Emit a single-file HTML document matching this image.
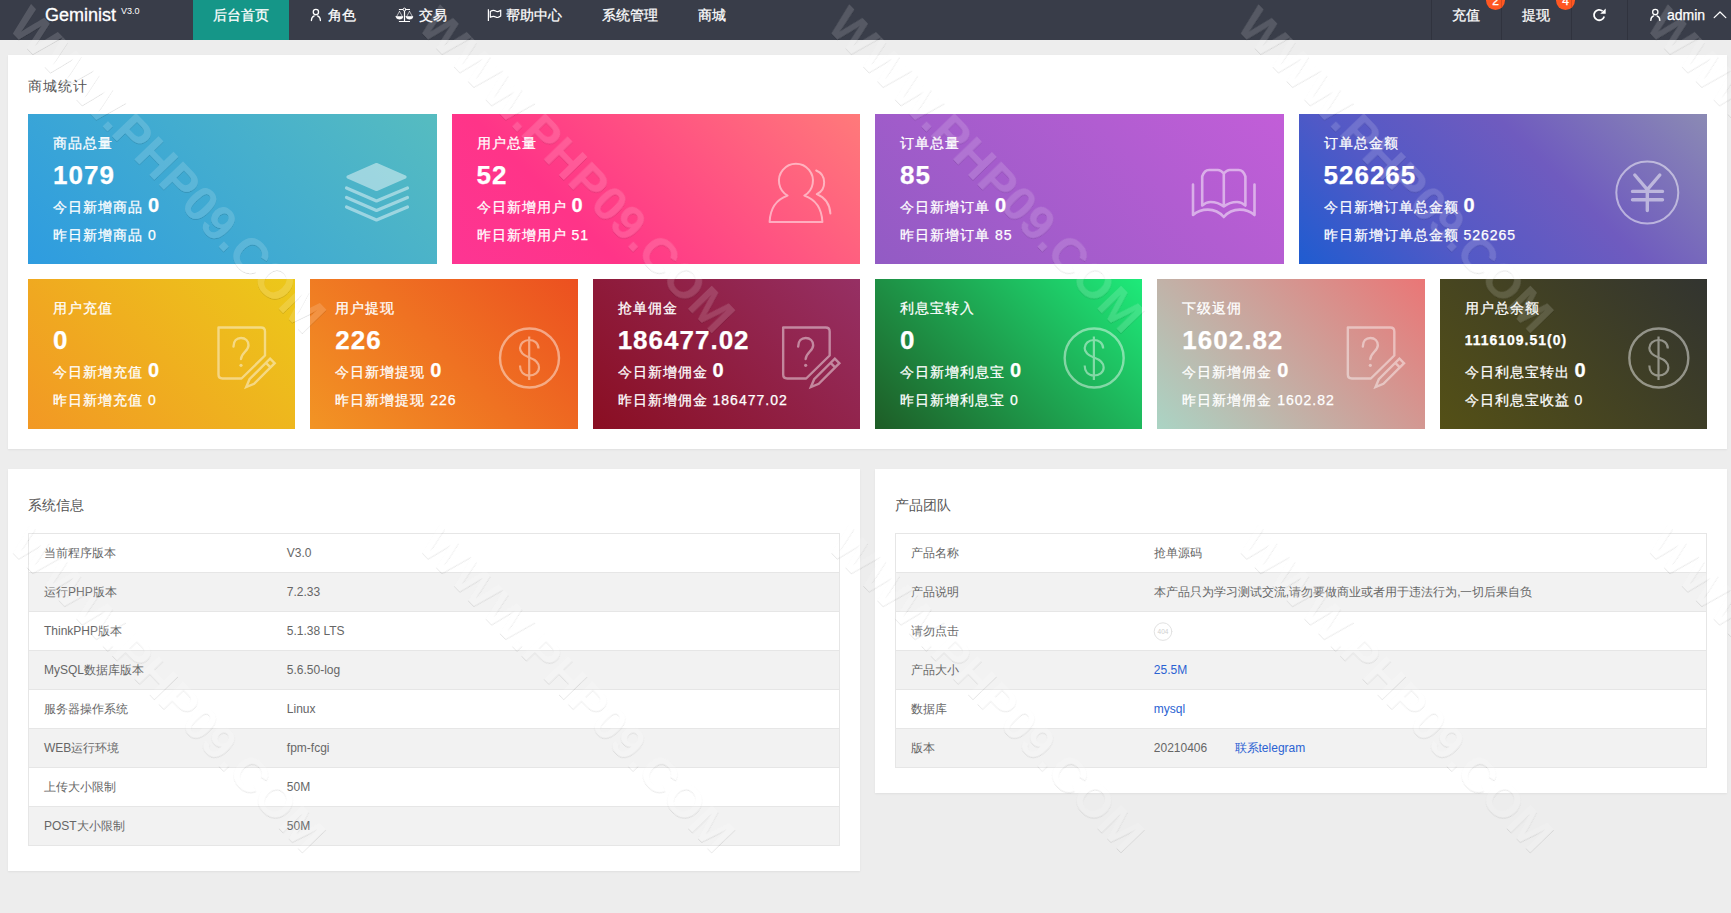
<!DOCTYPE html>
<html><head><meta charset="utf-8">
<style>
*{margin:0;padding:0;box-sizing:border-box}
html,body{width:1731px;height:913px;overflow:hidden;background:#ededed;font-family:"Liberation Sans",sans-serif}
.a{position:absolute;white-space:nowrap}
#nav{position:absolute;left:0;top:0;width:1731px;height:40px;background:#393d49}
.ni{position:absolute;top:0;height:30px;line-height:30px;font-size:14px;color:#fff;white-space:nowrap;-webkit-text-stroke:0.25px #fff}
.sep{position:absolute;top:0;width:1px;height:40px;background:rgba(0,0,0,0.15)}
.badge{position:absolute;top:-9px;width:19px;height:19px;border-radius:50%;background:#ff5722;color:#fff;font-size:12px;line-height:21px;text-align:center;-webkit-text-stroke:0.3px #fff}
.panel{position:absolute;background:#fff;box-shadow:0 1px 2px rgba(0,0,0,.06)}
.ptitle{position:absolute;font-size:14px;color:#555;line-height:20px;white-space:nowrap}
.card{position:absolute;height:150px;color:#fff;letter-spacing:1px;-webkit-text-stroke:0.25px #fff}
.card .t{position:absolute;left:25px;top:19px;font-size:14px;line-height:20px;white-space:nowrap}
.card .n{position:absolute;left:25px;top:44px;font-size:26px;font-weight:bold;line-height:34px;white-space:nowrap}
.card .d1{position:absolute;left:25px;top:79px;font-size:14px;line-height:24px;white-space:nowrap}
.card .d1 b{font-size:20px}
.card .d2{position:absolute;left:25px;top:111px;font-size:14px;line-height:20px;white-space:nowrap}
table{position:absolute;border-collapse:collapse;font-size:12px;color:#666}
td{height:39px;border:1px solid #e6e6e6;border-left:none;border-right:none;padding:0 15px;line-height:20px;white-space:nowrap}
table{border-left:1px solid #e6e6e6;border-right:1px solid #e6e6e6}
tr:nth-child(even) td{background:#f2f2f2}
.blue{color:#2a62d2}
</style></head><body>

<div id="nav">
  <div class="a" style="left:45px;top:0;height:30px;line-height:30px;font-size:18px;color:#fff;-webkit-text-stroke:0.3px #fff">Geminist</div>
  <div class="a" style="left:121px;top:6px;line-height:10px;font-size:9px;color:#fff">V3.0</div>
  <div style="position:absolute;left:193px;top:0;width:96px;height:40px;background:#159688"></div>
  <div class="ni" style="left:213px">后台首页</div>
  <div class="ni" style="left:328px">角色</div>
  <div class="ni" style="left:419px">交易</div>
  <div class="ni" style="left:506px">帮助中心</div>
  <div class="ni" style="left:602px">系统管理</div>
  <div class="ni" style="left:698px">商城</div>

  <div class="badge" style="left:1486px">2</div>
  <div class="badge" style="left:1556px">4</div>
  <div class="sep" style="left:1431px"></div>
  <div class="sep" style="left:1501px"></div>
  <div class="sep" style="left:1571px"></div>
  <div class="sep" style="left:1627px"></div>
  <div class="ni" style="left:1452px">充值</div>
  <div class="ni" style="left:1522px">提现</div>
  <div class="ni" style="left:1667px">admin</div>
</div>

<!-- panel 1 -->
<div class="panel" style="left:8px;top:55px;width:1719px;height:394px"></div>
<div class="ptitle" style="left:28px;top:76px;letter-spacing:1px">商城统计</div>

<div class="card" style="left:28px;top:114px;width:408.5px;background:linear-gradient(45deg,#2e9ce0,#56bcc0)">
  <div class="t">商品总量</div><div class="n">1079</div>
  <div class="d1">今日新增商品 <b>0</b></div><div class="d2">昨日新增商品 0</div>
</div>
<div class="card" style="left:451.5px;top:114px;width:408.5px;background:linear-gradient(45deg,#fd3593 0%,#ff3488 30%,#ff7a7a 100%)">
  <div class="t">用户总量</div><div class="n">52</div>
  <div class="d1">今日新增用户 <b>0</b></div><div class="d2">昨日新增用户 51</div>
</div>
<div class="card" style="left:875px;top:114px;width:408.5px;background:linear-gradient(45deg,#925bc4,#c25ed8)">
  <div class="t">订单总量</div><div class="n">85</div>
  <div class="d1">今日新增订单 <b>0</b></div><div class="d2">昨日新增订单 85</div>
</div>
<div class="card" style="left:1298.5px;top:114px;width:408.5px;background:linear-gradient(45deg,#1f5cd0 0%,#5259c6 30%,#6f5bbf 62%,#8b8ab4 100%)">
  <div class="t">订单总金额</div><div class="n">526265</div>
  <div class="d1">今日新增订单总金额 <b>0</b></div><div class="d2">昨日新增订单总金额 526265</div>
</div>

<div class="card" style="left:28px;top:279px;width:267.33px;background:linear-gradient(45deg,#f29824,#ecc81a)">
  <div class="t">用户充值</div><div class="n">0</div>
  <div class="d1">今日新增充值 <b>0</b></div><div class="d2">昨日新增充值 0</div>
</div>
<div class="card" style="left:310.33px;top:279px;width:267.33px;background:linear-gradient(45deg,#f29424,#ec5020)">
  <div class="t">用户提现</div><div class="n">226</div>
  <div class="d1">今日新增提现 <b>0</b></div><div class="d2">昨日新增提现 226</div>
</div>
<div class="card" style="left:592.67px;top:279px;width:267.33px;background:linear-gradient(45deg,#8a0e22,#963064)">
  <div class="t">抢单佣金</div><div class="n">186477.02</div>
  <div class="d1">今日新增佣金 <b>0</b></div><div class="d2">昨日新增佣金 186477.02</div>
</div>
<div class="card" style="left:875px;top:279px;width:267.33px;background:linear-gradient(45deg,#1e5c26,#1eea7a)">
  <div class="t">利息宝转入</div><div class="n">0</div>
  <div class="d1">今日新增利息宝 <b>0</b></div><div class="d2">昨日新增利息宝 0</div>
</div>
<div class="card" style="left:1157.33px;top:279px;width:267.33px;background:linear-gradient(45deg,#aad4c4,#ea7676)">
  <div class="t">下级返佣</div><div class="n">1602.82</div>
  <div class="d1">今日新增佣金 <b>0</b></div><div class="d2">昨日新增佣金 1602.82</div>
</div>
<div class="card" style="left:1439.67px;top:279px;width:267.33px;background:linear-gradient(45deg,#545016,#323430)">
  <div class="t">用户总余额</div><div class="n" style="font-size:14px">1116109.51(0)</div>
  <div class="d1">今日利息宝转出 <b>0</b></div><div class="d2">今日利息宝收益 0</div>
</div>

<!-- panel 2 -->
<div class="panel" style="left:8px;top:469px;width:852px;height:402px"></div>
<div class="ptitle" style="left:28px;top:495px">系统信息</div>
<table style="left:28px;top:533px;width:812px">
<colgroup><col style="width:30%"><col></colgroup>
<tr><td>当前程序版本</td><td>V3.0</td></tr>
<tr><td>运行PHP版本</td><td>7.2.33</td></tr>
<tr><td>ThinkPHP版本</td><td>5.1.38 LTS</td></tr>
<tr><td>MySQL数据库版本</td><td>5.6.50-log</td></tr>
<tr><td>服务器操作系统</td><td>Linux</td></tr>
<tr><td>WEB运行环境</td><td>fpm-fcgi</td></tr>
<tr><td>上传大小限制</td><td>50M</td></tr>
<tr><td>POST大小限制</td><td>50M</td></tr>
</table>

<!-- panel 3 -->
<div class="panel" style="left:875px;top:469px;width:852px;height:324px"></div>
<div class="ptitle" style="left:895px;top:495px">产品团队</div>
<table style="left:895px;top:533px;width:812px">
<colgroup><col style="width:30%"><col></colgroup>
<tr><td>产品名称</td><td>抢单源码</td></tr>
<tr><td>产品说明</td><td>本产品只为学习测试交流,请勿要做商业或者用于违法行为,一切后果自负</td></tr>
<tr><td>请勿点击</td><td></td></tr>
<tr><td>产品大小</td><td class="blue">25.5M</td></tr>
<tr><td>数据库</td><td class="blue">mysql</td></tr>
<tr><td>版本</td><td>20210406 <span class="blue" style="margin-left:24px">联系telegram</span></td></tr>
</table>

<!-- icons overlay -->
<svg class="a" style="left:0;top:0" width="1731" height="913" viewBox="0 0 1731 913" fill="none" stroke-linecap="round" stroke-linejoin="round">
  <!-- nav icons -->
  <g stroke="#fff" stroke-width="1.3">
    <circle cx="315.9" cy="12.1" r="2.65"/>
    <path d="M314.2,15.9C312.3,16.6 311.4,18.5 311.4,20.6M317.6,15.9C319.5,16.6 320.4,18.5 320.4,20.6"/>
    <circle cx="1655.3" cy="12.1" r="2.65"/>
    <path d="M1653.6,15.9C1651.7,16.6 1650.8,18.5 1650.8,20.4M1657,15.9C1658.9,16.6 1659.8,18.5 1659.8,20.4"/>
  </g>
  <!-- scale -->
  <g stroke="#fff" fill="none">
    <path d="M398.9,9.5H410M404.5,10.5V21.5M398.9,21.5H410" stroke-width="1.2" stroke-linecap="butt"/>
    <circle cx="404.5" cy="9.5" r="1.4" stroke-width="1" fill="#393d49"/>
    <path d="M399.5,11.3L396.5,16.8M399.5,11.3L402.5,16.8M409.5,11.3L406.5,16.8M409.5,11.3L412.5,16.8" stroke-width="0.8" opacity="0.8"/>
    <path d="M396.1,16.6H402.9A3.4,2.6 0 0 1 396.1,16.6ZM406.1,16.6H412.9A3.4,2.6 0 0 1 406.1,16.6Z" fill="#fff" stroke-width="0.6"/>
  </g>
  <!-- flag -->
  <g stroke="#fff" stroke-width="1.2" fill="none">
    <path d="M488.4,9.2V20.9" stroke-linecap="butt"/>
    <path d="M490.3,11.5C491.5,10.7 492.5,10.4 493.6,10.4C495.5,10.4 495.8,11.7 497.5,11.7C498.8,11.7 499.8,10.8 500.7,10.2V16C499.8,16.6 498.8,17.5 497.5,17.5C495.8,17.5 495.5,16.3 493.6,16.3C492.5,16.3 491.5,16.6 490.3,17.3Z"/>
  </g>
  <!-- chevron -->
  <path d="M1714.2,17.6L1720,12L1725.8,17.6" stroke="#fff" stroke-width="1.3"/>
  <!-- refresh -->
  <path d="M1602.6,11.1A5.2,5.2 0 1 0 1604.2,16.4" stroke="#fff" stroke-width="1.8" stroke-linecap="butt"/>
  <path d="M1605.7,8.6V13.8H1600.2Z" fill="#fff"/>

  <!-- card icons row1 -->
  <g stroke="#fff" stroke-width="3.2" opacity="0.45">
    <path d="M348,177L376.5,164.5L405,177L376.5,189.5Z" fill="#fff"/>
    <path d="M346.5,188L376.5,201L407.5,188M346.5,197.5L376.5,210.5L407.5,197.5M346.5,207L376.5,220L407.5,207"/>
  </g>
  <g stroke="#fff" stroke-width="2" opacity="0.5">
    <path d="M787.6,195.6A17,17 0 1 1 804.3,195.6Q821.5,201.5 822.4,222H769.6Q770.5,201.5 787.6,195.6Z"/>
    <path d="M816.2,170.5A13,13 0 0 1 816.8,194.2Q829.5,199.5 830.4,213.5"/>
  </g>
  <g stroke="#fff" stroke-width="2.6" opacity="0.5">
    <path d="M1193,184.5V215C1197,211.5 1202,209.6 1207.9,209.6C1214,209.6 1219.5,212 1223.8,217C1228,212 1233.5,209.6 1239.7,209.6C1245.5,209.6 1250.5,211.5 1254.5,215V184.5"/>
    <path d="M1223.8,173.5C1222,171.5 1220.5,170 1218,170H1209C1205.5,170 1203.5,172.5 1202.2,176.5V205.5C1205,203 1207.5,202 1210.5,202C1215.5,202 1220,203.5 1223.8,206.5C1227.6,203.5 1232.1,202 1237.1,202C1240.1,202 1242.6,203 1245.4,205.5V176.5C1244.1,172.5 1242.1,170 1238.6,170H1229.6C1227.1,170 1225.6,171.5 1223.8,173.5V206.5"/>
  </g>
  <g stroke="#fff" opacity="0.5">
    <circle cx="1647.3" cy="192.6" r="31" stroke-width="2"/>
    <path d="M1634.8,175L1647.3,189.6L1659.8,175M1632.5,191.4H1662.5M1632.5,199.8H1662.5M1647.3,189.6V210.5" stroke-width="3.4"/>
  </g>
  <!-- row2 icons -->
  <defs>
    <g id="survey" stroke="#fff" stroke-width="2.4" opacity="0.45">
      <path d="M218.5,327.5H261Q265,327.5 265,331.5V355.5L241.5,378.5H222.5Q218.5,378.5 218.5,374.5Z"/>
      <path d="M233.5,346.5C233.5,341 236.8,338 241,338C245.5,338 248.5,341 248.5,345.2C248.5,351 241.5,352.5 241,359"/>
      <circle cx="241" cy="365.3" r="1.6" fill="#fff" stroke="none"/>
      <path d="M270.1,358.6L274.7,363.2L254.1,383.8L246.2,387.1L249.5,379.2ZM265.9,362.8L270.5,367.4" stroke-linejoin="miter"/>
    </g>
    <g id="dollar" stroke="#fff" opacity="0.45">
      <circle cx="529.5" cy="358" r="29.5" stroke-width="2.4"/>
      <path d="M529.2,336.5V380" stroke-width="2.2" stroke-linecap="butt"/>
      <path d="M538.5,348.5C538.5,343 534,340 529.2,340C524,340 520,343.5 520,348C520,353 524,355.5 529.2,357.5C535,359.5 539,362 539,367.5C539,372.5 534.5,375.5 529.2,375.5C523.5,375.5 520,371.5 520,365.5" stroke-width="2.2" stroke-linecap="butt"/>
    </g>
  </defs>
  <use href="#survey"/>
  <use href="#survey" x="564.67"/>
  <use href="#survey" x="1129.33"/>
  <use href="#dollar"/>
  <use href="#dollar" x="564.67"/>
  <use href="#dollar" x="1129.33"/>
  <!-- 404 -->
  <circle cx="1163" cy="631.6" r="8.8" stroke="#e2e2e2" stroke-width="1"/>
  <text x="1163" y="633.6" font-size="6.5" fill="#d0d0d0" text-anchor="middle" font-family="Liberation Sans">404</text>
</svg>
<svg class="a" style="left:0;top:0;pointer-events:none" width="1731" height="913" viewBox="0 0 1731 913">
  <defs>
    <filter id="wmf" x="-10%" y="-50%" width="120%" height="200%">
      <feOffset in="SourceAlpha" dx="0" dy="1.3" result="off"/>
      <feComposite in="off" in2="SourceAlpha" operator="out" result="edge"/>
      <feGaussianBlur in="edge" stdDeviation="0.5" result="eb"/>
      <feColorMatrix in="eb" type="matrix" values="0 0 0 0 0  0 0 0 0 0  0 0 0 0 0  0 0 0 0.13 0" result="shadow"/>
      <feColorMatrix in="SourceGraphic" type="matrix" values="1 0 0 0 0  0 1 0 0 0  0 0 1 0 0  0 0 0 0.15 0" result="fill"/>
      <feMerge><feMergeNode in="shadow"/><feMergeNode in="fill"/></feMerge>
    </filter>
  </defs>
  <g filter="url(#wmf)" fill="#fff" font-family="Liberation Sans" font-size="48.5" font-weight="bold" text-anchor="middle">
    <text transform="translate(168.0,169.5) rotate(46)" y="17">WWW.PHP09.COM</text>
    <text transform="translate(577.3,169.5) rotate(46)" y="17">WWW.PHP09.COM</text>
    <text transform="translate(986.6,169.5) rotate(46)" y="17">WWW.PHP09.COM</text>
    <text transform="translate(1395.9,169.5) rotate(46)" y="17">WWW.PHP09.COM</text>
    <text transform="translate(1805.2,169.5) rotate(46)" y="17">WWW.PHP09.COM</text>
    <text transform="translate(168.0,688.7) rotate(46)" y="17">WWW.PHP09.COM</text>
    <text transform="translate(577.3,688.7) rotate(46)" y="17">WWW.PHP09.COM</text>
    <text transform="translate(986.6,688.7) rotate(46)" y="17">WWW.PHP09.COM</text>
    <text transform="translate(1395.9,688.7) rotate(46)" y="17">WWW.PHP09.COM</text>
    <text transform="translate(1805.2,688.7) rotate(46)" y="17">WWW.PHP09.COM</text>
  </g>
</svg>

</body></html>
